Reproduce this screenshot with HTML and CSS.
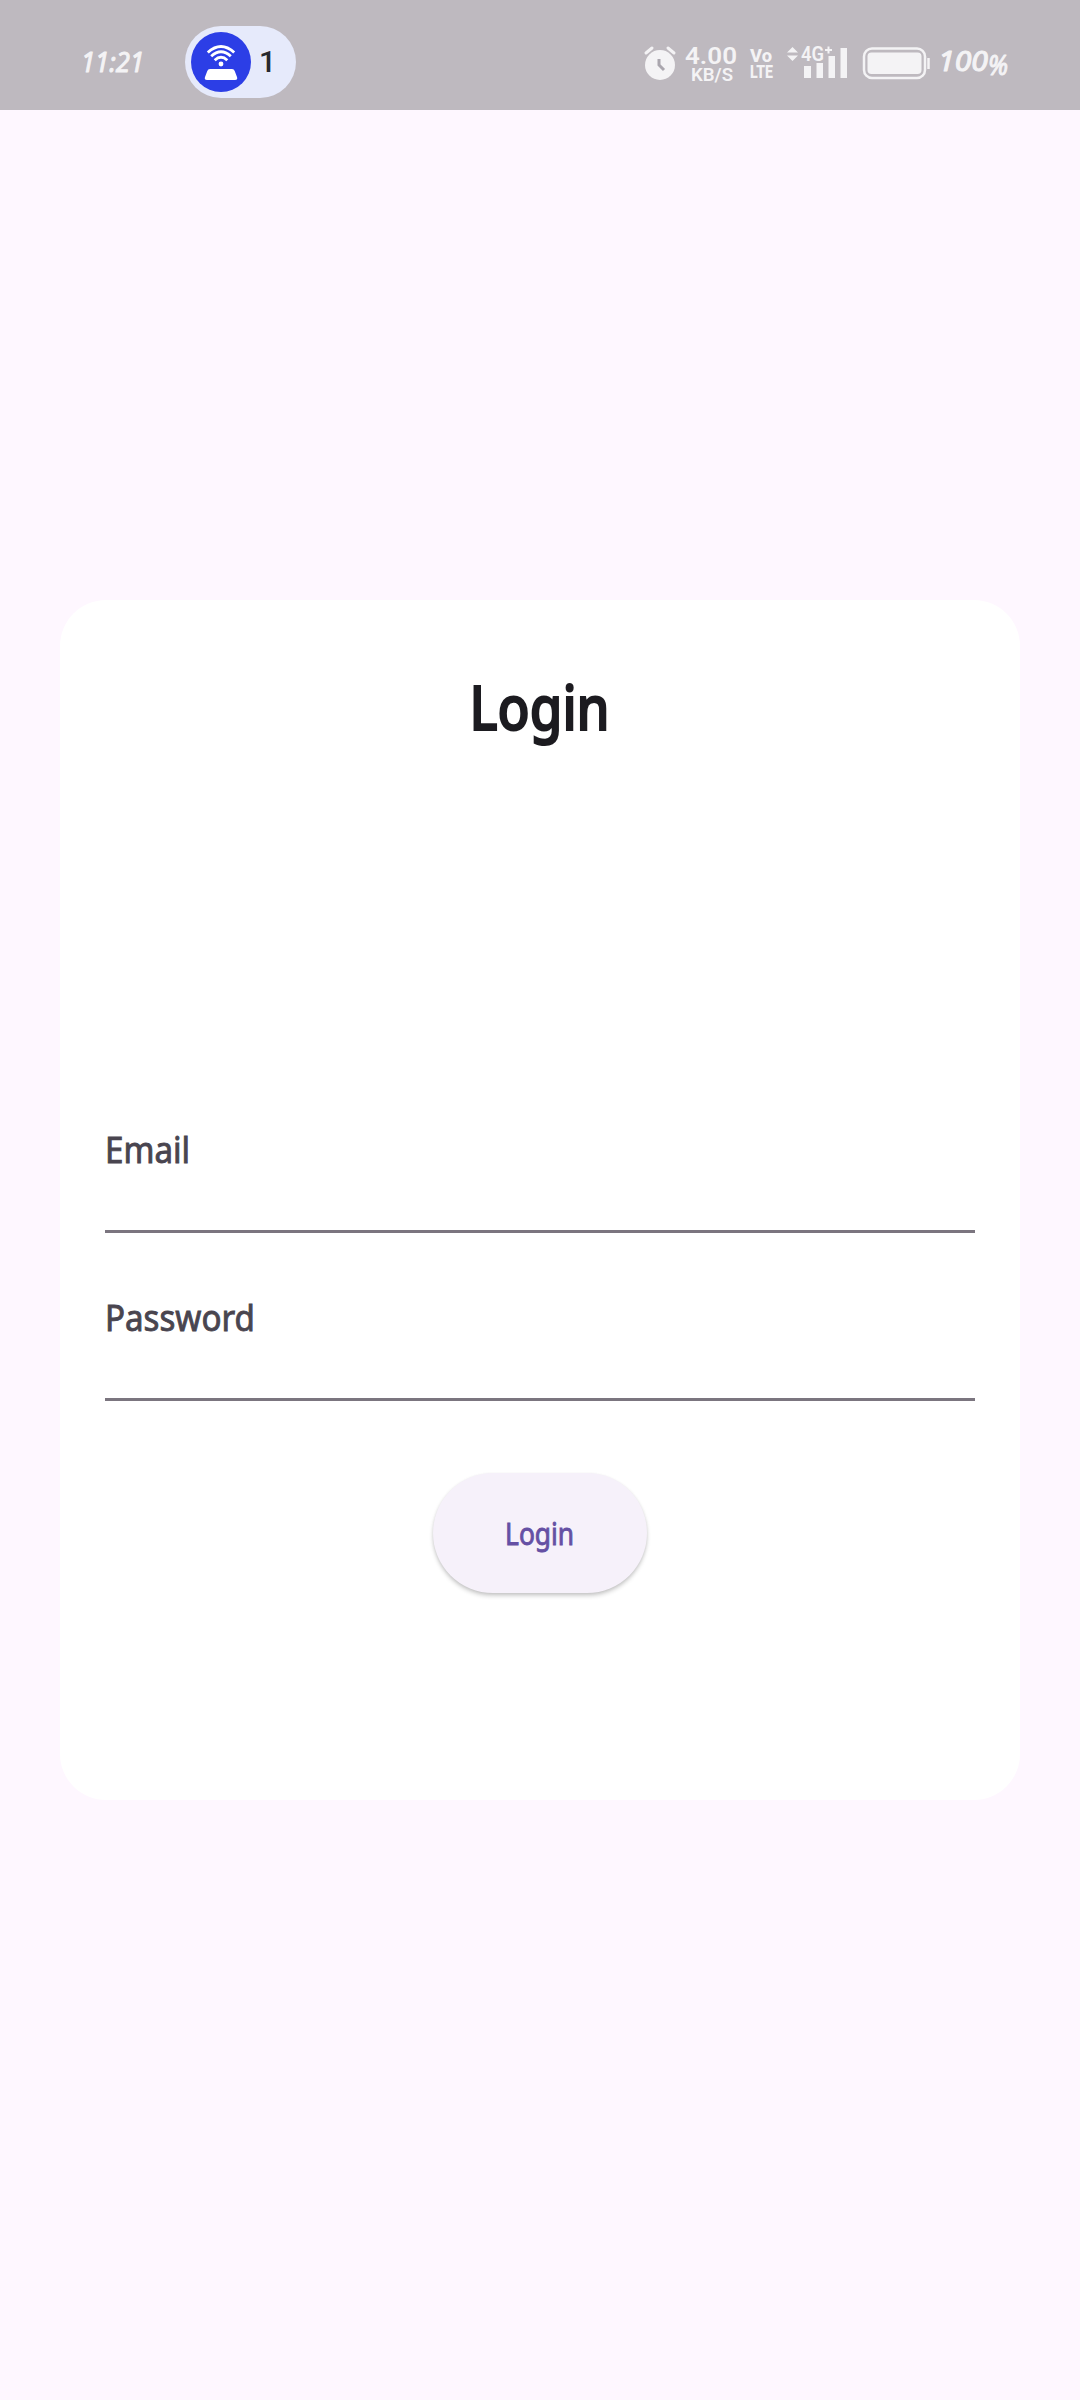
FILE: index.html
```html
<!DOCTYPE html>
<html lang="en">
<head>
<meta charset="utf-8">
<title>Login</title>
<link rel="stylesheet" href="styles.css">
</head>
<body>
<header class="status">
  <svg class="clock" width="66" height="36" viewBox="0 0 66 36"><text class="hand slant" x="1" y="28" font-size="27" textLength="63" lengthAdjust="spacingAndGlyphs">11:21</text></svg>
  <div class="hotspot">
    <svg width="60" height="60" viewBox="0 0 60 60">
      <circle cx="30" cy="30" r="30" fill="#2c3ee6"/>
      <g fill="none" stroke="#fff" stroke-width="2.9">
        <path d="M16.8 20.5Q30 8.5 43.2 20.5"/>
        <path d="M20.2 24.3Q30 15.3 39.8 24.3"/>
        <path d="M23.7 28.2Q30 22.4 36.3 28.2"/>
      </g>
      <circle cx="30" cy="32" r="2.4" fill="#fff"/>
      <path d="M19 37H41Q43 37 43.7 39L46 45Q47 48 44 48H16Q13 48 14 45L16.3 39Q17 37 19 37Z" fill="#fff"/>
    </svg>
    <span class="count">1</span>
  </div>
  <svg class="indicators" width="370" height="50" viewBox="640 36 370 50">
    <path d="M646 52L652 47M668 47L674 52" fill="none" stroke="#f4f3f5" stroke-width="3" stroke-linecap="round"/>
    <circle cx="660" cy="64" r="15" fill="#f4f3f5"/>
    <path d="M659 58V64L664 69" fill="none" stroke="#aaa6ae" stroke-width="3"/>
    <text class="sans" x="685" y="62.500" font-size="24" textLength="52" lengthAdjust="spacingAndGlyphs">4.00</text>
    <text class="sans" x="691" y="80" font-size="18" textLength="42" lengthAdjust="spacingAndGlyphs">KB/S</text>
    <text class="sans bold" x="750" y="61" font-size="19" textLength="22" lengthAdjust="spacingAndGlyphs">Vo</text>
    <text class="sans bold" x="750" y="76.500" font-size="19" textLength="23" lengthAdjust="spacingAndGlyphs">LTE</text>
    <path d="M787 51.5L792.5 46L798 51.5ZM787 54.5L792.5 60L798 54.5Z" fill="#f4f3f5"/>
    <path d="M804 65h7v12h-7zM816.5 62h6.500v15h-6.500zM828.500 55h6.500v22h-6.500zM840.500 47h6.500v30h-6.500z" fill="#f4f3f5"/>
    <text class="sans" x="801" y="60" font-size="20" textLength="23" lengthAdjust="spacingAndGlyphs">4G</text>
    <path d="M825 49H832M828.5 45.5V52.5" stroke="#f4f3f5" stroke-width="2"/>
    <rect x="864" y="47.500" width="61" height="29.500" rx="8" fill="none" stroke="#f4f3f5" stroke-width="2.500"/>
    <rect x="867.500" y="51.500" width="54" height="21.500" rx="4" fill="#f4f3f5"/>
    <path d="M928.5 57V68" stroke="#f4f3f5" stroke-width="2.500"/>
    <text class="hand slant" x="938" y="70" font-size="27" textLength="50" lengthAdjust="spacingAndGlyphs">100</text>
    <text class="hand slant" x="988" y="74" font-size="27" textLength="20" lengthAdjust="spacingAndGlyphs">%</text>
  </svg>
</header>
<main class="screen">
  <section class="card">
    <h1 class="title"><span class="hand narrow">Login</span></h1>
    <form class="fields">
      <label class="field"><span class="hand label">Email</span></label>
      <label class="field"><span class="hand label">Password</span></label>
    </form>
    <button class="submit" type="button"><span class="hand narrow">Login</span></button>
  </section>
</main>
</body>
</html>
```
FILE: styles.css
```css
* { box-sizing: border-box; }
body {
  margin: 0;
  height: 2400px;
  display: flex;
  flex-direction: column;
  background: #fef7ff;
  font-family: "Noto Sans", sans-serif;
}
.hand {
  font-family: "Noto Sans", sans-serif;
  font-weight: 400;
  stroke-linejoin: round;
  -webkit-text-stroke: .9px currentColor;
}
.status {
  height: 110px;
  flex: none;
  display: flex;
  align-items: center;
  padding: 14px 70px 0 80px;
  background: #beb9bf;
}
.status text { fill: #f4f3f5; }
.status .hand { stroke: #f4f3f5; stroke-width: 1px; -webkit-text-stroke: 1px #f4f3f5; }
.slant { font-style: italic; }
.sans { font-family: Roboto, sans-serif; font-weight: 600; }
.status .bold { font-weight: 800; }
.hotspot {
  width: 111px;
  height: 72px;
  margin-left: 39px;
  padding-left: 6px;
  display: flex;
  align-items: center;
  gap: 8px;
  border-radius: 36px;
  background: #e6eafb;
}
.count {
  font: 500 30px/1 Roboto, sans-serif;
  color: #27282e;
}
.indicators { margin-left: auto; }
.screen {
  flex: 1;
  padding: 490px 60px 600px;
}
.card {
  height: 1200px;
  padding: 60px 45px 0;
  display: flex;
  flex-direction: column;
  align-items: center;
  border-radius: 46px;
  background: #fff;
}
.title {
  margin: 0;
  height: 96px;
  font-size: 62px;
  line-height: 92px;
  color: #1c1b20;
}
.title .hand { font-weight: 500; -webkit-text-stroke-width: 2px; }
.narrow { display: inline-block; transform: scaleX(.85); }
.fields { width: 100%; margin-top: 309px; }
.field {
  display: block;
  height: 168px;
  padding-top: 61px;
  border-bottom: 3px solid #7b757f;
  font-size: 36px;
  line-height: 48px;
  color: #49454f;
}
.label { display: inline-block; transform: scaleX(.92); transform-origin: 0 50%; }
.submit {
  width: 214px;
  height: 120px;
  margin-top: 72px;
  padding: 0;
  border: 0;
  border-radius: 60px;
  background: #f6f1fa;
  box-shadow: 0 3px 4px rgba(0, 0, 0, .18), 0 1px 3px rgba(0, 0, 0, .08);
  font-size: 31px;
  color: #6550a4;
}
```
